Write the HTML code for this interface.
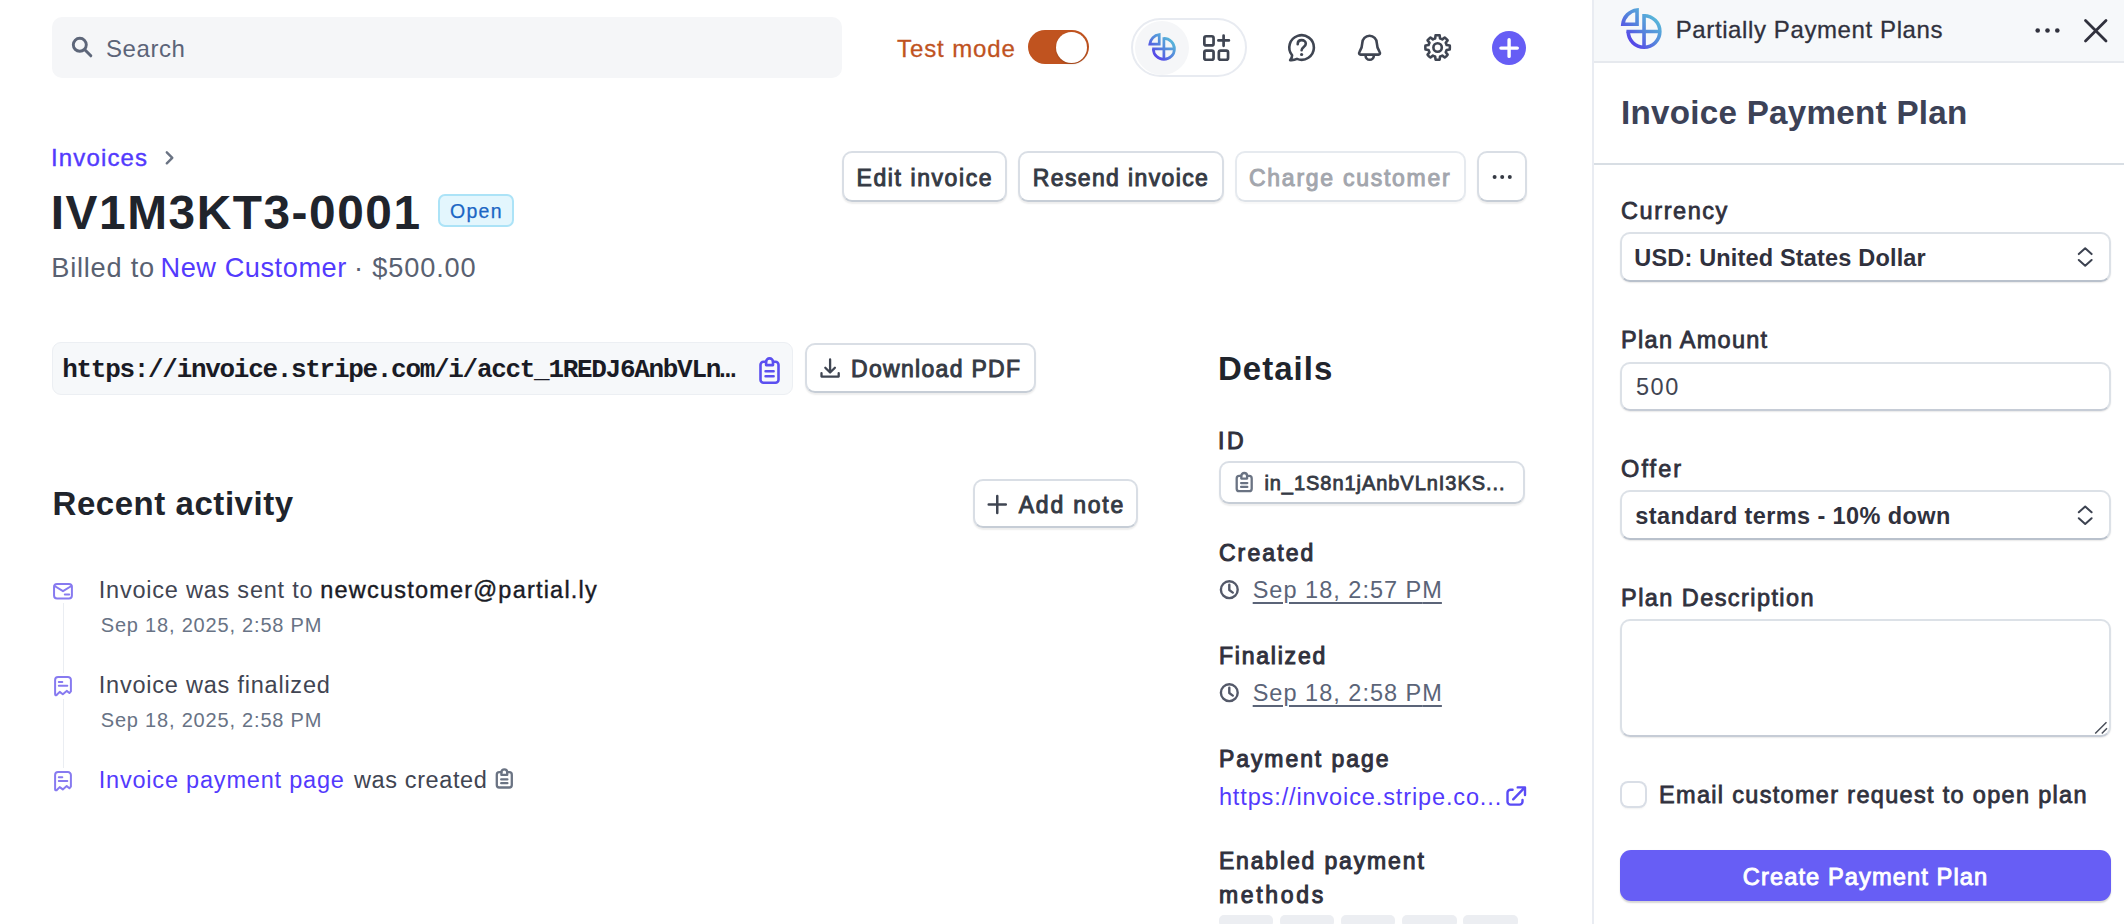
<!DOCTYPE html>
<html>
<head>
<meta charset="utf-8">
<title>Invoice</title>
<style>
*{box-sizing:border-box;margin:0;padding:0}
html,body{width:2124px;height:924px;overflow:hidden;background:#fff}
body{font-family:"Liberation Sans",sans-serif;color:#414552;position:relative}
.a{position:absolute}
.t{position:absolute;white-space:nowrap;line-height:1}
.btn{position:absolute;background:#fff;border-radius:10px;border:2px solid #d9dee5;border-bottom-color:#c6cdd6;box-shadow:0 1.5px 1.5px rgba(0,0,0,.07)}
.field{position:absolute;left:1620px;width:490.7px;height:49.6px;background:#fff;border-radius:10px;border:2px solid #dce1e7;border-bottom-color:#b9c1cc;box-shadow:0 1px 1.5px rgba(0,0,0,.09)}
svg{position:absolute;overflow:visible}
.ic{fill:none;stroke:#474e5a;stroke-width:1.6;stroke-linecap:round;stroke-linejoin:round}
</style>
</head>
<body>
<!-- ===== structural boxes ===== -->
<div class="a" style="left:52px;top:17px;width:790px;height:60.5px;background:#f5f6f8;border-radius:10px"></div>
<div class="a" style="left:1028px;top:30px;width:61px;height:34px;border-radius:17px;background:#c0531f"></div>
<div class="a" style="left:1056px;top:31.5px;width:31px;height:31px;border-radius:16px;background:#fff;box-shadow:0 1px 2px rgba(0,0,0,.2)"></div>
<div class="a" style="left:1131px;top:17.5px;width:115.5px;height:59.5px;border-radius:30px;border:2px solid #e8ebf1;background:#fff"></div>
<div class="a" style="left:1134.5px;top:20.5px;width:54px;height:54px;border-radius:27px;background:#f5f6f8"></div>
<div class="a" style="left:1492px;top:31px;width:34px;height:34px;border-radius:17px;background:#665df5"></div>

<!-- right panel -->
<div class="a" style="left:1592px;top:0;width:2px;height:924px;background:#e9ecf2"></div>
<div class="a" style="left:1594px;top:0;width:530px;height:61.5px;background:#f6f8fa"></div>
<div class="a" style="left:1594px;top:61px;width:530px;height:1.5px;background:#e6e9ee"></div>
<div class="a" style="left:1594px;top:163px;width:530px;height:2px;background:#d8dee4"></div>
<div class="field" style="top:232px"></div>
<div class="field" style="top:361.5px;border-bottom-color:#c6ccd6"></div>
<div class="field" style="top:490.4px"></div>
<div class="field" style="top:619.3px;height:118px;border-bottom-color:#c6ccd6"></div>
<div class="a" style="left:1622px;top:783px;width:23px;height:22.5px;border-radius:6px;background:#fff;box-shadow:0 0 0 2px #d9dee6,0 2px 2px 1px rgba(0,0,0,.06)"></div>
<div class="a" style="left:1620px;top:850px;width:491px;height:50.6px;border-radius:11px;background:#675ef5;box-shadow:0 1.5px 1.5px rgba(0,0,0,.16)"></div>

<!-- invoice header -->
<div class="a" style="left:437.5px;top:194.2px;width:76.3px;height:33.3px;border-radius:7px;background:#e3f6fd;border:2px solid #ace3f7"></div>
<div class="btn" style="left:842px;top:151.2px;width:164.75px;height:50.5px"></div>
<div class="btn" style="left:1017.5px;top:151.2px;width:206.25px;height:50.5px"></div>
<div class="btn" style="left:1234.5px;top:151.2px;width:231.75px;height:50.5px;border-color:#e6eaef;border-bottom-color:#dde2e8;box-shadow:0 1.5px 1.5px rgba(0,0,0,.03)"></div>
<div class="btn" style="left:1477px;top:151.2px;width:50px;height:50.5px"></div>

<!-- url row -->
<div class="a" style="left:52px;top:342px;width:740.5px;height:52.5px;border-radius:9px;background:#f6f8fa;border:1.5px solid #eceff3"></div>
<div class="btn" style="left:805px;top:343.2px;width:230.5px;height:50.3px"></div>
<div class="btn" style="left:972.5px;top:478.7px;width:165.75px;height:49.8px"></div>

<!-- activity timeline -->
<div class="a" style="left:62.7px;top:603px;width:1.5px;height:70px;background:#eaedf2"></div>
<div class="a" style="left:62.7px;top:698.5px;width:1.5px;height:69px;background:#eaedf2"></div>

<!-- details -->
<div class="btn" style="left:1219px;top:460.5px;width:306.3px;height:43.2px;border-radius:10px"></div>
<div class="a" style="left:1219.2px;top:915.3px;width:53.6px;height:12px;border-radius:5px;background:#eceef2"></div>
<div class="a" style="left:1280.1px;top:915.3px;width:53.8px;height:12px;border-radius:5px;background:#eceef2"></div>
<div class="a" style="left:1341px;top:915.3px;width:53.8px;height:12px;border-radius:5px;background:#eceef2"></div>
<div class="a" style="left:1402.1px;top:915.3px;width:54.6px;height:12px;border-radius:5px;background:#eceef2"></div>
<div class="a" style="left:1463px;top:915.3px;width:54.8px;height:12px;border-radius:5px;background:#eceef2"></div>

<!-- ===== icons ===== -->
<svg width="2124" height="924" viewBox="0 0 2124 924" style="left:0;top:0" fill="none" stroke-linecap="round" stroke-linejoin="round">
<defs>
<linearGradient id="lg" gradientUnits="userSpaceOnUse" x1="-12" y1="12" x2="16" y2="-16"><stop offset="0" stop-color="#5646e8"/><stop offset="0.43" stop-color="#5585dc"/><stop offset="1" stop-color="#58c4d8"/></linearGradient>
<g id="logo" stroke="url(#lg)" stroke-linecap="butt" stroke-linejoin="miter">
<path d="M0 -15.8A15.8 15.8 0 1 1 -15.8 0"/><path d="M0 -17.6V15.8M-17.6 0H15.8"/><path d="M-7 -7.3H-21.2A16.1 16.1 0 0 1 -7 -21.5Z"/>
</g>
</defs>
<!-- search -->
<circle cx="79.8" cy="44.8" r="6.5" stroke="#5d6679" stroke-width="2.9"/><path d="M84.8 49.8L90.8 55.8" stroke="#5d6679" stroke-width="3"/>
<!-- logos -->
<use href="#logo" transform="translate(1644.05 31.5)" stroke-width="3.6"/>
<use href="#logo" transform="translate(1163.9 48.9) scale(0.665)" stroke-width="4.1"/>
<!-- apps+ -->
<g stroke="#3f4552" stroke-width="2.7">
<rect x="1204.35" y="36.25" width="9.2" height="9.2" rx="1.8"/><rect x="1204.35" y="50.55" width="9.2" height="9.2" rx="1.8"/><rect x="1218.85" y="50.55" width="9.2" height="9.2" rx="1.8"/>
<path d="M1218.4 40.4H1228.9M1223.6 35.5V45.8"/>
</g>
<!-- help -->
<g stroke="#3f4552" stroke-width="2.6">
<path d="M1292.1 55.3A12.3 12.3 0 1 1 1297 58.9C1295 59.9 1292.3 60.3 1290.1 60.1C1291.4 58.9 1292.2 57.3 1292.1 55.3Z"/>
<path d="M1297.7 44.2C1297.7 41.6 1299.4 40.1 1301.7 40.1C1304.1 40.1 1305.8 41.6 1305.8 43.7C1305.8 46.9 1301.6 47 1301.6 50.3"/>
<circle cx="1301.6" cy="54.5" r="1.6" fill="#3f4552" stroke="none"/>
</g>
<!-- bell -->
<g stroke="#3f4552" stroke-width="2.6">
<path d="M1362.3 43A7.25 7.25 0 0 1 1376.8 43C1376.8 47 1377.8 49 1379.7 52.2A1.5 1.5 0 0 1 1378.4 54.6H1360.7A1.5 1.5 0 0 1 1359.4 52.2C1361.3 49 1362.3 47 1362.3 43Z"/>
<path d="M1365.6 55.7A4.1 4.1 0 0 0 1373.8 55.7"/>
</g>
<!-- gear -->
<g stroke="#3f4552" stroke-width="2.6">
<path d="M1435.17 38.42L1435.57 35.37A12.3 12.3 0 0 1 1439.63 35.37L1440.03 38.42A9.4 9.4 0 0 1 1442.30 39.36L1444.74 37.49A12.3 12.3 0 0 1 1447.61 40.36L1445.74 42.80A9.4 9.4 0 0 1 1446.68 45.07L1449.73 45.47A12.3 12.3 0 0 1 1449.73 49.53L1446.68 49.93A9.4 9.4 0 0 1 1445.74 52.20L1447.61 54.64A12.3 12.3 0 0 1 1444.74 57.51L1442.30 55.64A9.4 9.4 0 0 1 1440.03 56.58L1439.63 59.63A12.3 12.3 0 0 1 1435.57 59.63L1435.17 56.58A9.4 9.4 0 0 1 1432.90 55.64L1430.46 57.51A12.3 12.3 0 0 1 1427.59 54.64L1429.46 52.20A9.4 9.4 0 0 1 1428.52 49.93L1425.47 49.53A12.3 12.3 0 0 1 1425.47 45.47L1428.52 45.07A9.4 9.4 0 0 1 1429.46 42.80L1427.59 40.36A12.3 12.3 0 0 1 1430.46 37.49L1432.90 39.36A9.4 9.4 0 0 1 1435.17 38.42Z"/>
<circle cx="1437.6" cy="47.5" r="4.2"/>
</g>
<!-- plus in circle -->
<path d="M1500.9 48.1H1517.3M1509.1 39.8V56.4" stroke="#fff" stroke-width="3.4"/>
<!-- panel header dots + close -->
<g fill="#30313d"><circle cx="2037.7" cy="30.5" r="2.3"/><circle cx="2047.5" cy="30.5" r="2.3"/><circle cx="2057.3" cy="30.5" r="2.3"/></g>
<path d="M2085.5 20.5L2106 41M2106 20.5L2085.5 41" stroke="#30313d" stroke-width="2.8"/>
<!-- select chevrons -->
<g stroke="#3c4250" stroke-width="2">
<path d="M2078.8 254.1L2085.2 248.3L2091.6 254.1M2078.8 260L2085.2 265.8L2091.6 260"/>
<path d="M2078.8 512.3L2085.2 506.5L2091.6 512.3M2078.8 518.2L2085.2 524L2091.6 518.2"/>
</g>
<!-- textarea resize grip -->
<path d="M2095.2 733.5L2106.5 722.2M2101.8 733.5L2107 728.3" stroke="#4a4f5a" stroke-width="1.5" stroke-linecap="butt"/>
<!-- breadcrumb chevron -->
<path d="M166.8 152.3L172.3 157.8L166.8 163.3" stroke="#6a7383" stroke-width="2.4"/>
<!-- more button dots -->
<g fill="#353a44"><circle cx="1494.6" cy="177" r="2"/><circle cx="1502.2" cy="177" r="2"/><circle cx="1509.8" cy="177" r="2"/></g>
<!-- url clipboard (purple) -->
<g id="clipP" stroke="#5b4ff0" stroke-width="2.6">
<path d="M773 361.8H775.5A3 3 0 0 1 778.5 364.8V379.7A3 3 0 0 1 775.5 382.7H763.5A3 3 0 0 1 760.5 379.7V364.8A3 3 0 0 1 763.5 361.8H766"/>
<path d="M766.1 365.1V361.8A3.45 3.45 0 0 1 773 361.8V365.1Z"/>
<path d="M765.6 371.2H773.6M765.6 376.3H773.6"/>
</g>
<!-- download -->
<g stroke="#3f4552" stroke-width="2.3">
<path d="M830.1 359.4V372.3M825.3 367.7L830.1 372.5L834.9 367.7M821.5 373.2V376.6H838.7V373.2"/>
</g>
<!-- add note plus -->
<path d="M988.7 504.6H1005.8M997.25 496.1V513.1" stroke="#3f4552" stroke-width="2.5"/>
<!-- mail -->
<g stroke="#877af0" stroke-width="2">
<rect x="54.05" y="583.95" width="17.85" height="14.55" rx="3"/>
<path d="M54.6 586L63 591.2L71.4 586M64.8 594.6H69.2" />
</g>
<!-- receipts -->
<g id="rcpt" stroke="#877af0" stroke-width="2">
<path d="M55.1 694V679.9A3 3 0 0 1 58.1 676.9H67.9A3 3 0 0 1 70.9 679.9V691.4L69.4 693L66.7 690.9L62.8 694.2L59.7 691.9L56.6 695Q55.1 695.6 55.1 694Z"/>
<path d="M58.8 682H62.3M58.8 685.8H67.3"/>
</g>
<use href="#rcpt" transform="translate(0 95.2)"/>
<!-- gray clipboards -->
<g id="clipG" stroke="#6a7383" stroke-width="2.3">
<path d="M507.2 772.2H509.3A2.5 2.5 0 0 1 511.8 774.7V785A2.500 2.500 0 0 1 509.3 787.5H499.3A2.5 2.5 0 0 1 496.800 785V774.7A2.5 2.5 0 0 1 499.3 772.200H501.4"/>
<path d="M501.4 774.9V772.2A2.9 2.9 0 0 1 507.2 772.2V774.9Z"/>
<path d="M501.2 779.4H507.400M501.200 783.2H507.400"/>
</g>
<use href="#clipG" transform="translate(739.9 -296.300)" stroke="#353a44"/>
<!-- clocks -->
<g id="clk" stroke="#545969" stroke-width="2.4">
<circle cx="1229.3" cy="589.7" r="8.4"/><path d="M1229.3 584.7V590L1232.8 592.600"/>
</g>
<use href="#clk" transform="translate(0 103)"/>
<!-- external link -->
<g stroke="#5a4bf5" stroke-width="2.4">
<path d="M1512.6 789.8H1510.5A3 3 0 0 0 1507.5 792.8V801.650A3 3 0 0 0 1510.500 804.650H1519.5A3 3 0 0 0 1522.500 801.65V800"/>
<path d="M1513.200 799.300L1524.600 787.600M1517.700 787.400H1525V795"/>
</g>
</svg>

<!-- text -->
<div class="t" id="search" style="left:106.00px;top:37.20px;font-size:24px;color:#5c6478;letter-spacing:0.561px;">Search</div>
<div class="t" id="testmode" style="left:897.00px;top:37.00px;font-size:24px;color:#c0531f;letter-spacing:0.891px;-webkit-text-stroke:0.3px currentColor;">Test mode</div>
<div class="t" id="ppp" style="left:1675.75px;top:18.00px;font-size:24px;color:#30313d;letter-spacing:0.605px;-webkit-text-stroke:0.3px currentColor;">Partially Payment Plans</div>
<div class="t" id="ipp" style="left:1621.00px;top:95.75px;font-size:33.2px;color:#3c4257;font-weight:bold;letter-spacing:0.266px;">Invoice Payment Plan</div>
<div class="t" id="l1" style="left:1621.10px;top:200.00px;font-size:23.5px;color:#30313d;letter-spacing:1.560px;-webkit-text-stroke:0.8px currentColor;">Currency</div>
<div class="t" id="f1" style="left:1634.30px;top:246.70px;font-size:23.5px;color:#30313d;font-weight:bold;letter-spacing:0.174px;">USD: United States Dollar</div>
<div class="t" id="l2" style="left:1621.10px;top:329.20px;font-size:23.5px;color:#30313d;letter-spacing:1.278px;-webkit-text-stroke:0.8px currentColor;">Plan Amount</div>
<div class="t" id="f2" style="left:1635.90px;top:376.10px;font-size:23.5px;color:#414552;letter-spacing:1.580px;">500</div>
<div class="t" id="l3" style="left:1621.10px;top:458.20px;font-size:23.5px;color:#30313d;letter-spacing:2.054px;-webkit-text-stroke:0.8px currentColor;">Offer</div>
<div class="t" id="f3" style="left:1635.30px;top:505.40px;font-size:23.5px;color:#30313d;font-weight:bold;letter-spacing:0.391px;">standard terms - 10% down</div>
<div class="t" id="l4" style="left:1621.10px;top:587.30px;font-size:23.5px;color:#30313d;letter-spacing:1.424px;-webkit-text-stroke:0.8px currentColor;">Plan Description</div>
<div class="t" id="l5" style="left:1659.00px;top:784.00px;font-size:23.5px;color:#30313d;letter-spacing:1.319px;-webkit-text-stroke:0.8px currentColor;">Email customer request to open plan</div>
<div class="t" id="cpp" style="left:1742.75px;top:866.00px;font-size:23.7px;color:#ffffff;letter-spacing:1.071px;-webkit-text-stroke:0.9px currentColor;">Create Payment Plan</div>
<div class="t" id="inv" style="left:51.00px;top:146.25px;font-size:24px;color:#533afd;letter-spacing:1.137px;-webkit-text-stroke:0.4px currentColor;">Invoices</div>
<div class="t" id="title" style="left:50.75px;top:188.75px;font-size:47.8px;color:#20242c;font-weight:bold;letter-spacing:1.554px;">IV1M3KT3-0001</div>
<div class="t" id="open" style="left:450.00px;top:201.50px;font-size:19.5px;color:#1c66c4;letter-spacing:1.297px;-webkit-text-stroke:0.25px currentColor;">Open</div>
<div class="t" id="billed1" style="left:51.25px;top:254.00px;font-size:27.2px;color:#596171;letter-spacing:0.768px;">Billed to</div>
<div class="t" id="billed2" style="left:160.50px;top:254.00px;font-size:27.2px;color:#533afd;letter-spacing:0.547px;">New Customer</div>
<div class="t" id="billed3" style="left:354.00px;top:254.00px;font-size:27.2px;color:#596171;letter-spacing:0.842px;">· $500.00</div>
<div class="t" id="b1" style="left:856.50px;top:166.50px;font-size:23px;color:#353a44;letter-spacing:1.584px;-webkit-text-stroke:0.95px currentColor;">Edit invoice</div>
<div class="t" id="b2" style="left:1032.75px;top:166.50px;font-size:23px;color:#353a44;letter-spacing:1.368px;-webkit-text-stroke:0.95px currentColor;">Resend invoice</div>
<div class="t" id="b3" style="left:1249.00px;top:166.50px;font-size:23px;color:#a3a6ad;letter-spacing:1.732px;-webkit-text-stroke:0.95px currentColor;">Charge customer</div>
<div class="t" id="url" style="left:62.25px;top:357.00px;font-size:26px;color:#1a1b25;font-weight:bold;font-family:'Liberation Mono',monospace;letter-spacing:-1.304px;">https://invoice.stripe.com/i/acct_1REDJ6AnbVLn…</div>
<div class="t" id="dl" style="left:851.00px;top:357.75px;font-size:23px;color:#353a44;letter-spacing:1.307px;-webkit-text-stroke:0.95px currentColor;">Download PDF</div>
<div class="t" id="ra" style="left:52.50px;top:486.50px;font-size:33px;color:#20242c;font-weight:bold;letter-spacing:0.548px;">Recent activity</div>
<div class="t" id="an" style="left:1018.75px;top:493.50px;font-size:23px;color:#353a44;letter-spacing:1.780px;-webkit-text-stroke:0.95px currentColor;">Add note</div>
<div class="t" id="a1a" style="left:98.75px;top:579.00px;font-size:23.5px;color:#414552;letter-spacing:0.776px;">Invoice was sent to</div>
<div class="t" id="a1b" style="left:320.25px;top:579.00px;font-size:23.5px;color:#1a1b25;letter-spacing:1.209px;-webkit-text-stroke:0.4px currentColor;">newcustomer@partial.ly</div>
<div class="t" id="a1d" style="left:100.75px;top:614.50px;font-size:20px;color:#687385;letter-spacing:0.804px;">Sep 18, 2025, 2:58 PM</div>
<div class="t" id="a2" style="left:98.75px;top:674.00px;font-size:23.5px;color:#414552;letter-spacing:0.777px;">Invoice was finalized</div>
<div class="t" id="a2d" style="left:100.75px;top:709.75px;font-size:20px;color:#687385;letter-spacing:0.804px;">Sep 18, 2025, 2:58 PM</div>
<div class="t" id="a3a" style="left:98.75px;top:769.25px;font-size:23.5px;color:#533afd;letter-spacing:0.797px;">Invoice payment page</div>
<div class="t" id="a3b" style="left:354.00px;top:769.25px;font-size:23.5px;color:#414552;letter-spacing:0.612px;">was created</div>
<div class="t" id="det" style="left:1217.90px;top:351.80px;font-size:33px;color:#20242c;font-weight:bold;letter-spacing:1.039px;">Details</div>
<div class="t" id="d1" style="left:1217.90px;top:429.60px;font-size:23px;color:#30313d;letter-spacing:2.610px;-webkit-text-stroke:1px currentColor;">ID</div>
<div class="t" id="idv" style="left:1264.40px;top:473.20px;font-size:20px;color:#353a44;letter-spacing:0.952px;-webkit-text-stroke:0.8px currentColor;">in_1S8n1jAnbVLnI3KS...</div>
<div class="t" id="d2" style="left:1218.90px;top:542.00px;font-size:23px;color:#30313d;letter-spacing:2.111px;-webkit-text-stroke:1px currentColor;">Created</div>
<div class="t" id="d2v" style="left:1252.70px;top:579.20px;font-size:23.5px;color:#5b6478;letter-spacing:1.009px;text-decoration:underline;text-decoration-thickness:1.6px;text-underline-offset:3.5px;">Sep 18, 2:57 P<span style="letter-spacing:0">M</span></div>
<div class="t" id="d3" style="left:1218.90px;top:644.80px;font-size:23px;color:#30313d;letter-spacing:1.793px;-webkit-text-stroke:1px currentColor;">Finalized</div>
<div class="t" id="d3v" style="left:1252.70px;top:682.00px;font-size:23.5px;color:#5b6478;letter-spacing:1.009px;text-decoration:underline;text-decoration-thickness:1.6px;text-underline-offset:3.5px;">Sep 18, 2:58 P<span style="letter-spacing:0">M</span></div>
<div class="t" id="d4" style="left:1218.90px;top:747.80px;font-size:23px;color:#30313d;letter-spacing:1.934px;-webkit-text-stroke:1px currentColor;">Payment page</div>
<div class="t" id="d4v" style="left:1218.90px;top:785.60px;font-size:23.5px;color:#533afd;letter-spacing:0.878px;">https://invoice.stripe.co...</div>
<div class="t" id="d5" style="left:1218.90px;top:849.60px;font-size:23px;color:#30313d;letter-spacing:1.848px;-webkit-text-stroke:1px currentColor;">Enabled payment</div>
<div class="t" id="d6" style="left:1218.90px;top:883.50px;font-size:23px;color:#30313d;letter-spacing:2.697px;-webkit-text-stroke:1px currentColor;">methods</div>
</body>
</html>
